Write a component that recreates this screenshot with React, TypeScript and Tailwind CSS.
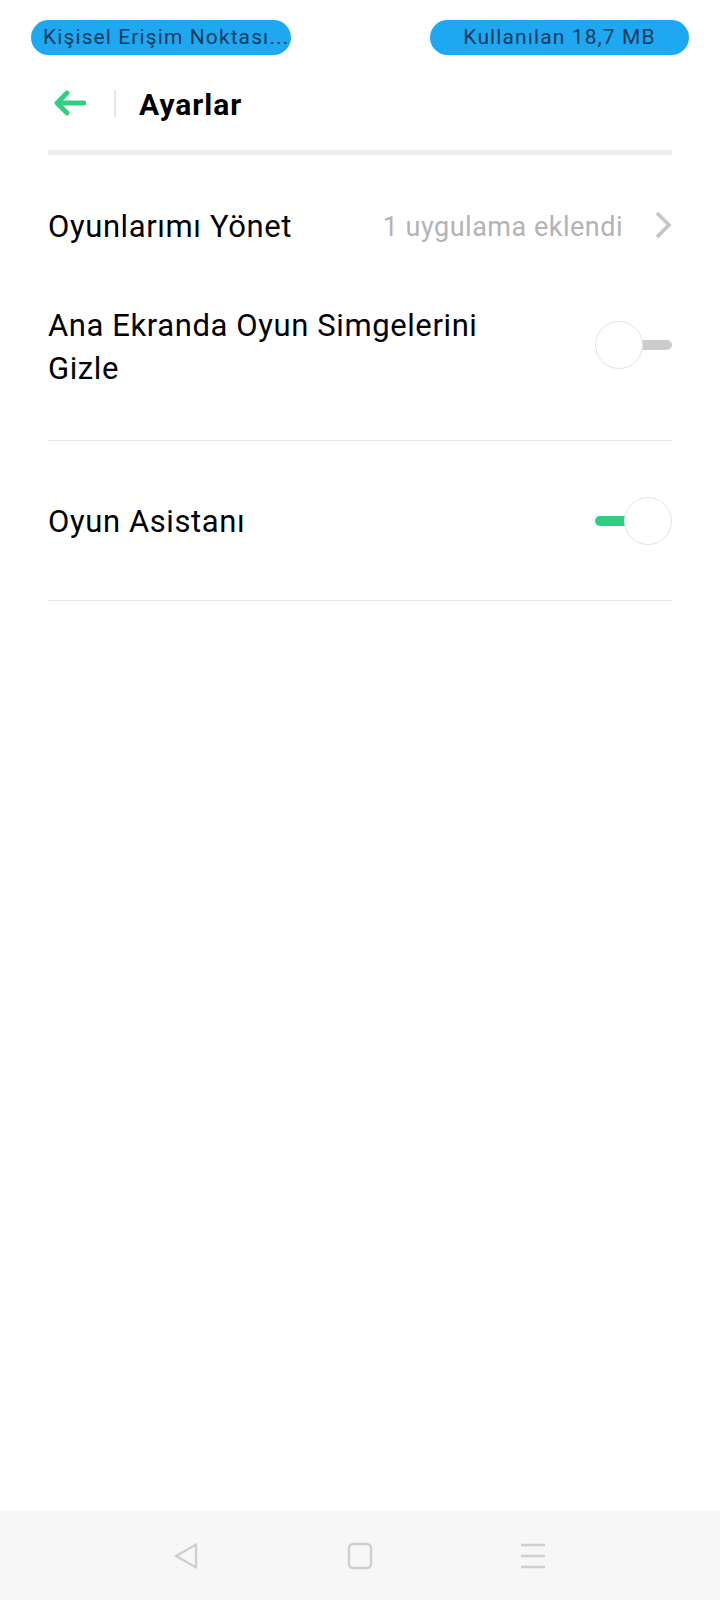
import React from "react";

const Toggle = ({ on }: { on: boolean }) => {
  if (on) {
    return (
      <div className="flex items-center">
        <div className="h-[10px] w-[53px] -mr-[24px] rounded-l-full bg-[#2fcf82]" />
        <div className="z-10 h-[48px] w-[48px] rounded-full border-[1.5px] border-[#e3e3e3] bg-white" />
      </div>
    );
  }
  return (
    <div className="flex items-center">
      <div className="z-10 h-[48px] w-[48px] rounded-full border-[1.5px] border-[#e3e3e3] bg-white" />
      <div className="h-[10px] w-[53px] -ml-[24px] rounded-r-full bg-[#cccccc]" />
    </div>
  );
};

export default function App() {
  return (
    <div
      className="flex h-[1600px] w-[720px] flex-col bg-white text-black"
      style={{ fontFamily: "Roboto, 'Noto Sans', sans-serif" }}
    >
      {/* status bar */}
      <div className="flex items-center justify-between px-[31px] pt-[20px]">
        <div className="flex h-[35px] w-[260px] items-center overflow-hidden whitespace-nowrap rounded-full bg-[#1ea8f2] pl-[12px] text-[21px] tracking-[1.1px] text-[#173a5c]">
          Kişisel Erişim Noktası...
        </div>
        <div className="flex h-[35px] w-[259px] items-center justify-center rounded-full bg-[#1ea8f2] text-[21px] tracking-[1.1px] text-[#173a5c]">
          Kullanılan 18,7 MB
        </div>
      </div>

      {/* header */}
      <div className="mt-[20px] flex h-[56px] items-center px-[54px]">
        <svg width="32" height="26" viewBox="0 0 32 26" fill="none">
          <path
            d="M3 13H30M13 3L3 13L13 23"
            stroke="#2fcf82"
            strokeWidth="4.8"
            strokeLinecap="round"
            strokeLinejoin="round"
          />
        </svg>
        <div className="ml-[28px] h-[27px] w-[2px] bg-[#e6e6e6]" />
        <h1 className="ml-[23px] pt-[2px] text-[30px] font-bold tracking-[1px]">Ayarlar</h1>
      </div>

      <div className="mx-[48px] mt-[19px] h-[5px] bg-[#eeeeee]" />

      {/* list */}
      <div className="mx-[48px] flex flex-col">
        <div className="flex h-[140px] items-center justify-between">
          <span className="pt-[4px] text-[31px] tracking-[0.6px]">Oyunlarımı Yönet</span>
          <div className="flex items-center">
            <span className="pt-[4px] text-[27px] tracking-[0.5px] text-[#b3b3b3]">1 uygulama eklendi</span>
            <svg className="ml-[32px]" width="17" height="28" viewBox="0 0 17 28" fill="none">
              <path d="M2 2L14 14L2 26" stroke="#c4c4c4" strokeWidth="3.5" />
            </svg>
          </div>
        </div>

        <div className="flex h-[100px] items-center justify-between">
          <span className="w-[460px] pt-[4px] text-[31px] leading-[43px] tracking-[0.6px]">
            Ana Ekranda Oyun Simgelerini Gizle
          </span>
          <Toggle on={false} />
        </div>
        <div className="mt-[45px] h-px bg-[#e3e3e3]" />

        <div className="flex h-[159px] items-center justify-between">
          <span className="pt-[4px] text-[31px] tracking-[0.6px]">Oyun Asistanı</span>
          <Toggle on={true} />
        </div>
        <div className="h-px bg-[#e3e3e3]" />
      </div>

      <div className="flex-1" />

      {/* navigation bar */}
      <div className="flex h-[89px] items-center bg-[#f7f7f7]">
        <div className="flex w-full items-center justify-between pl-[172px] pr-[174px]">
          <svg width="28" height="30" viewBox="0 0 28 30" fill="none">
            <path
              d="M24 3.5L4 15L24 26.5Z"
              stroke="#cfcfcf"
              strokeWidth="2.4"
              strokeLinejoin="round"
            />
          </svg>
          <svg width="26" height="28" viewBox="0 0 26 28" fill="none">
            <rect x="2" y="2" width="22" height="24" rx="4" stroke="#cfcfcf" strokeWidth="2.4" />
          </svg>
          <svg width="26" height="28" viewBox="0 0 26 28" fill="none">
            <path d="M1 3H25M1 14H25M1 25H25" stroke="#cfcfcf" strokeWidth="2.4" />
          </svg>
        </div>
      </div>
    </div>
  );
}
